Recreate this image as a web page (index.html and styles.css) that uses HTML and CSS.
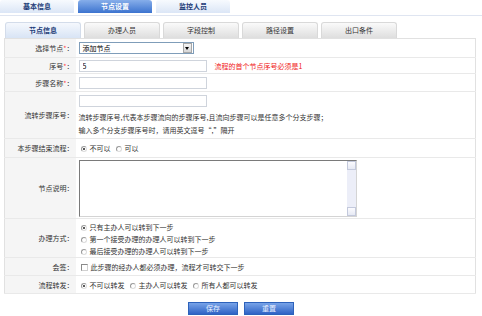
FILE: index.html
```html
<!DOCTYPE html>
<html lang="zh-CN">
<head>
<meta charset="utf-8">
<title>节点设置</title>
<link rel="stylesheet" href="styles.css">
</head>
<body>
<div class="top-tabs">
  <div class="ttab">基本信息</div>
  <div class="ttab active">节点设置</div>
  <div class="ttab">监控人员</div>
</div>
<div class="sub-tabs">
  <div class="stab active">节点信息</div>
  <div class="stab">办理人员</div>
  <div class="stab">字段控制</div>
  <div class="stab">路径设置</div>
  <div class="stab">出口条件</div>
</div>
<table class="form">
  <tr class="r-select">
    <th>选择节点<span class="req">*</span>：</th>
    <td><div class="select"><span class="sel-text">添加节点</span><span class="sel-btn"><span class="tri"></span></span></div></td>
  </tr>
  <tr class="r-seq">
    <th>序号<span class="req">*</span>：</th>
    <td><div class="inline"><input class="inp" type="text" value="5"><span class="warn">流程的首个节点序号必须是1</span></div></td>
  </tr>
  <tr class="r-name">
    <th>步骤名称<span class="req">*</span>：</th>
    <td><input class="inp" type="text" value=""></td>
  </tr>
  <tr class="r-next">
    <th>流转步骤序号：</th>
    <td>
      <input class="inp" type="text" value="">
      <div class="line l1">流转步骤序号,代表本步骤流向的步骤序号,且流向步骤可以是任意多个分支步骤；</div>
      <div class="line">输入多个分支步骤序号时，请用英文逗号“,”隔开</div>
    </td>
  </tr>
  <tr class="r-end">
    <th>本步骤结束流程：</th>
    <td><label class="opt"><span class="radio on"></span>不可以</label><label class="opt"><span class="radio"></span>可以</label></td>
  </tr>
  <tr class="r-desc">
    <th>节点说明：</th>
    <td>
      <div class="area-box">
        <textarea class="area"></textarea>
        <div class="vscroll">
          <span class="sbtn"></span>
          <span class="strack"></span>
          <span class="sbtn"></span>
        </div>
      </div>
    </td>
  </tr>
  <tr class="r-mode">
    <th>办理方式：</th>
    <td>
      <div class="line"><span class="radio on"></span>只有主办人可以转到下一步</div>
      <div class="line"><span class="radio"></span>第一个接受办理的办理人可以转到下一步</div>
      <div class="line"><span class="radio"></span>最后接受办理的办理人可以转到下一步</div>
    </td>
  </tr>
  <tr class="r-sign">
    <th>会签：</th>
    <td><span class="check"></span>此步骤的经办人都必须办理，流程才可转交下一步</td>
  </tr>
  <tr class="r-fwd">
    <th>流程转发：</th>
    <td><label class="opt"><span class="radio on"></span>不可以转发</label><label class="opt"><span class="radio"></span>主办人可以转发</label><label class="opt"><span class="radio"></span>所有人都可以转发</label></td>
  </tr>
</table>
<div class="actions">
  <button class="btn" type="button">保存</button>
  <button class="btn" type="button">重置</button>
</div>
</body>
</html>
```
FILE: styles.css
```css
* { box-sizing: border-box; }
body {
  margin: 0;
  width: 482px;
  font-family: "Noto Sans CJK SC", "Noto Sans", sans-serif;
  font-size: 7px;
  color: #333;
  background: #fff;
}
.top-tabs {
  display: flex;
  align-items: flex-start;
  gap: 4px;
  height: 16px;
  border-bottom: 1px solid #dfe5f1;
}
.ttab {
  width: 74px;
  height: 13px;
  line-height: 13px;
  text-align: center;
  border-radius: 3px 3px 0 0;
  background: linear-gradient(#f7fafe, #dbe6f6);
  color: #1d3c78;
  font-weight: bold;
}
.ttab.active {
  background: linear-gradient(#86aeea, #3c73cf);
  color: #fff;
}
.sub-tabs {
  display: flex;
  gap: 3px;
  margin: 6px 0 0 5px;
}
.stab {
  width: 76px;
  height: 16px;
  line-height: 15px;
  text-align: center;
  border: 1px solid #d9d9d9;
  border-bottom: none;
  border-radius: 3px 3px 0 0;
  background: linear-gradient(#fafafa, #dedede);
  color: #333;
}
.stab.active {
  background: linear-gradient(#f5f8fd, #d8e4f5);
  border-color: #d3dcea;
  color: #1d3c78;
  font-weight: bold;
}
.form {
  margin-left: 4px;
  width: 472px;
  border-collapse: collapse;
  border: 1px solid #e1e1e1;
}
.form th {
  width: 71px;
  background: #f5f5f5;
  text-align: right;
  font-weight: normal;
  padding: 0 2px 0 0;
  border-bottom: 1px solid #e9e9e9;
  white-space: nowrap;
  vertical-align: middle;
}
.form td {
  padding: 0 3px;
  border-bottom: 1px solid #e9e9e9;
  vertical-align: middle;
}
.req { color: #ff4a4a; }
.r-select { height: 19px; }
.r-seq { height: 16px; }
.r-name { height: 18px; }
.r-next { height: 47px; }
.r-end { height: 19px; }
.r-desc { height: 61px; }
.r-mode { height: 39px; }
.r-sign { height: 18px; }
.r-fwd { height: 18px; }

.select {
  display: flex;
  width: 115px;
  height: 12px;
  border: 1px solid #7f9db9;
  background: #fff;
  align-items: center;
}
.sel-text { flex: 1; padding-left: 3px; color: #000; }
.sel-btn {
  width: 9px;
  height: 10px;
  margin-right: 1px;
  background: linear-gradient(#f4f4f4, #d6d6d6);
  border: 1px solid #a7a7a7;
  display: flex;
  align-items: center;
  justify-content: center;
}
.tri {
  width: 0; height: 0;
  border-left: 2.5px solid transparent;
  border-right: 2.5px solid transparent;
  border-top: 3px solid #000;
}
.inline { display: flex; align-items: center; gap: 8px; }
.inp {
  display: block;
  width: 128px;
  height: 12px;
  border: 1px solid #cfd4dc;
  padding: 0 3px;
  font: inherit;
  color: #000;
  background: #fff;
}
.warn { color: #f01818; }
.r-next .inp { margin-top: 1px; }
.line { line-height: 12px; white-space: nowrap; }
.r-next .l1 { margin-top: 4px; margin-bottom: 1px; }
.opt { margin-right: 3px; white-space: nowrap; }
.radio {
  display: inline-block;
  width: 6px;
  height: 6px;
  border-radius: 50%;
  border: 1px solid #9a9a9a;
  border-right-color: #dcdcdc;
  border-bottom-color: #dcdcdc;
  margin: 0 3px 0 2px;
  vertical-align: -1px;
  position: relative;
  background: #fff;
}
.radio.on::after {
  content: "";
  position: absolute;
  left: 1px; top: 1px;
  width: 2px; height: 2px;
  border-radius: 50%;
  background: #222;
}
.check {
  display: inline-block;
  width: 7px;
  height: 7px;
  border: 1px solid #8a8a8a;
  border-right-color: #d0d0d0;
  border-bottom-color: #d0d0d0;
  margin: 0 3px 0 2px;
  vertical-align: -1px;
  background: #fff;
}
.r-mode td { padding-top: 1px; }
.area-box {
  display: flex;
  width: 278px;
  height: 57px;
  border: 1px solid #d4d4d4;
  border-top-color: #7a7a7a;
  border-left-color: #7a7a7a;
  background: #fff;
}
.area {
  flex: 1;
  min-width: 0;
  border: none;
  outline: none;
  resize: none;
  overflow: hidden;
  font: inherit;
  padding: 1px;
  background: #fff;
}
.vscroll {
  width: 9px;
  display: flex;
  flex-direction: column;
  background: #eceef8;
}
.sbtn {
  height: 9px;
  background: linear-gradient(#fbfbfe, #e6e9f4);
  border: 1px solid #c3c9dc;
}
.strack { flex: 1; }
.actions {
  display: flex;
  justify-content: center;
  gap: 6px;
  margin-top: 8px;
}
.btn {
  width: 50px;
  height: 13px;
  padding: 0;
  border: 1px solid #2d62bb;
  background: linear-gradient(#78a3e8, #2e63c5);
  color: #e8efff;
  font: inherit;
  line-height: 11px;
}
```
